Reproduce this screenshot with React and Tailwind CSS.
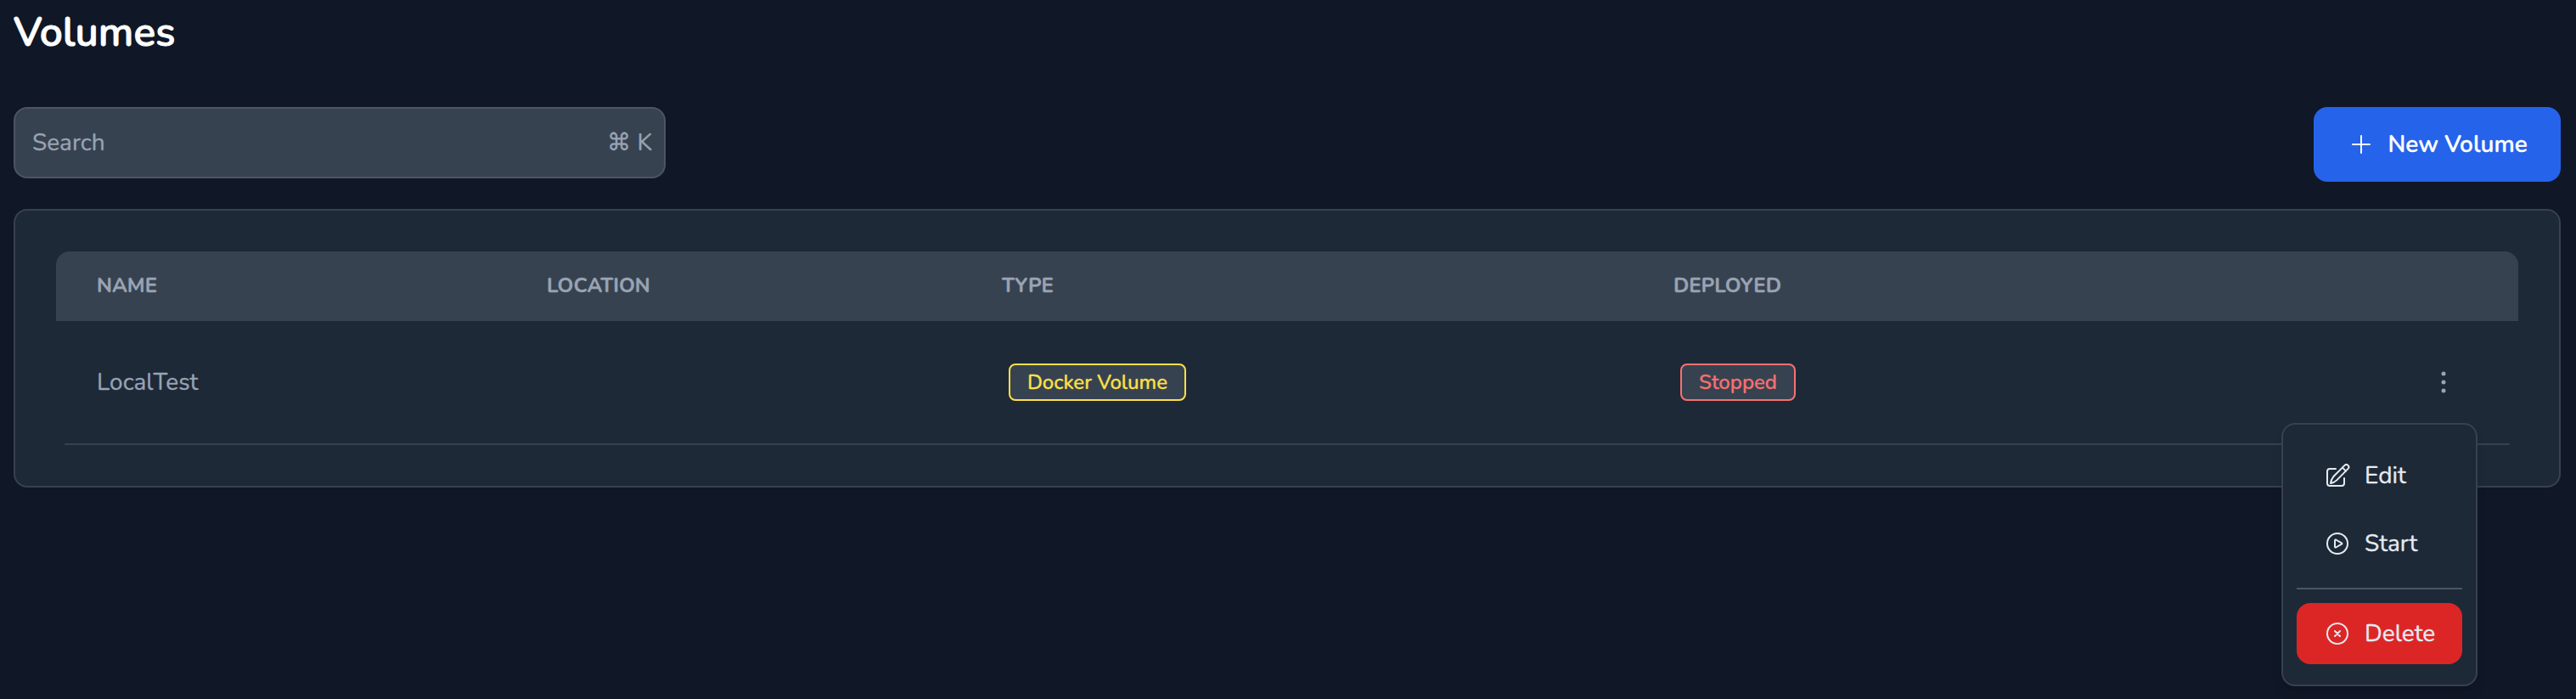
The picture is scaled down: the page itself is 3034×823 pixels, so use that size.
function Icon({ className = "", children }) {
  return (
    <svg width="28" height="28" viewBox="0 0 28 28" fill="none" stroke="currentColor" strokeWidth="2" strokeLinecap="round" strokeLinejoin="round" className={`shrink-0 ${className}`} aria-hidden="true">
      {children}
    </svg>
  );
}

function EditIcon() {
  return (
    <Icon>
      <path d="M11 6H4a3 3 0 0 0-3 3v14a3 3 0 0 0 3 3h14a3 3 0 0 0 3-3v-6" />
      <path d="M21.5 1.9a2.8 2.8 0 0 1 4 4L12.2 19.4Q9.2 22.3 5 23Q5.6 18.5 8.2 15.3Z" />
      <path d="M19 4.6l4 4" />
    </Icon>
  );
}

function PlayIcon() {
  return (
    <Icon>
      <circle cx="14" cy="14" r="12" />
      <path d="M11 10.2a.8.8 0 0 1 1.2-.7l6.8 3.8a.8.8 0 0 1 0 1.4l-6.8 3.8a.8.8 0 0 1-1.2-.7z" />
    </Icon>
  );
}

function DeleteIcon() {
  return (
    <Icon>
      <circle cx="14" cy="14" r="12" />
      <path d="M11 11l6 6M17 11l-6 6" />
    </Icon>
  );
}

function Badge({ className, children }) {
  return (
    <span className={`ml-2 flex h-11 items-center justify-center rounded-lg border-2 bg-[#374250] text-2xl font-medium ${className}`}>
      {children}
    </span>
  );
}

export default function App() {
  return (
    <div className="h-[823px] w-[3034px] overflow-hidden bg-[#101726] pl-4 pr-[18px] font-['Nunito',sans-serif] text-[28px] text-gray-400 [-webkit-text-stroke:0.3px_currentColor]">
      <h1 className="h-[126px] text-5xl leading-[76px] font-semibold text-white [-webkit-text-stroke:0.9px_currentColor]">Volumes</h1>

      <div className="flex h-[120px] items-start justify-between">
        <div className="flex h-[84px] w-[768px] items-center justify-between rounded-2xl border-2 border-[#4b5563] bg-[#374250] pr-3.5 pl-5 leading-10 text-[#99a3b3]">
          <span>Search</span>
          <span>⌘ K</span>
        </div>
        <button className="flex h-[88px] w-[291px] items-center rounded-2xl bg-[#2563eb] pl-[42px] leading-10 font-semibold text-white">
          <Icon>
            <path d="M14 4v20M4 14h20" />
          </Icon>
          <span className="ml-[17.5px]">New Volume</span>
        </button>
      </div>

      <div className="h-[328px] rounded-2xl border-2 border-[#374151] bg-[#1e2937] p-12">
        <div className="grid h-[82px] grid-cols-[530px_536px_791px_1fr_136px] items-center rounded-t-2xl bg-[#374250] pb-0.5 pl-12 text-2xl font-bold text-[#99a3b3]">
          <span>NAME</span>
          <span>LOCATION</span>
          <span>TYPE</span>
          <span>DEPLOYED</span>
        </div>
        <div className="grid h-36 grid-cols-[530px_536px_791px_1fr_136px] items-center pl-12 text-[#99a3b3]">
          <span className="leading-10">LocalTest</span>
          <span />
          <div className="flex">
            <Badge className="w-[209px] border-[#fde047] text-[#fde047]">Docker Volume</Badge>
          </div>
          <div className="flex">
            <Badge className="w-[136px] border-[#f87171] text-[#f87171]">Stopped</Badge>
          </div>
          <div className="relative flex pl-[34px]">
            <svg width="28" height="28" viewBox="0 0 28 28" fill="currentColor" aria-hidden="true">
              <circle cx="14" cy="4" r="2.5" />
              <circle cx="14" cy="14" r="2.5" />
              <circle cx="14" cy="24" r="2.5" />
            </svg>
            <div className="absolute top-[62px] right-12 h-[310px] w-[231px] rounded-2xl border-2 border-[#374151] bg-[#1e2937] px-4 py-6 leading-10 text-[#e5eaf2] shadow-lg">
              <div className="flex h-[72px] items-center pl-[35px]">
                <EditIcon />
                <span className="ml-[17px]">Edit</span>
              </div>
              <div className="mt-2 flex h-[72px] items-center pl-[34px]">
                <PlayIcon />
                <span className="ml-[18px]">Start</span>
              </div>
              <div className="my-4 h-0.5 bg-[#4b5563]" />
              <div className="flex h-[72px] items-center rounded-2xl bg-[#dc2626] pl-[34px]">
                <DeleteIcon />
                <span className="ml-[18px]">Delete</span>
              </div>
            </div>
          </div>
        </div>
        <div className="mx-2.5 h-0.5 rounded-full bg-[#374151]" />
      </div>
    </div>
  );
}
